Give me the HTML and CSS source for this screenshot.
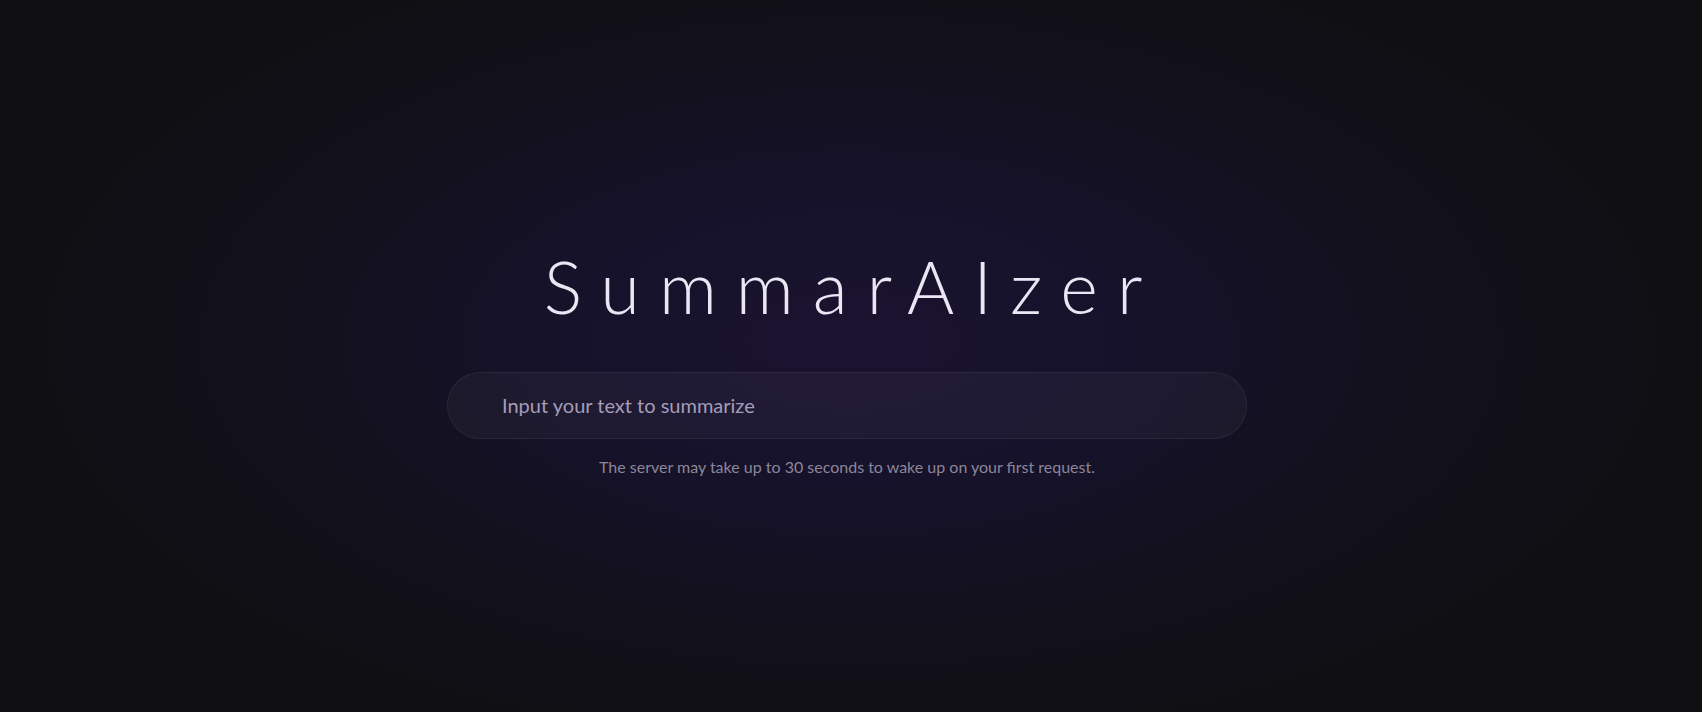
FILE: index.html
```html
<!DOCTYPE html>
<html lang="en">
<head>
<meta charset="utf-8">
<title>SummarAIzer</title>
<link rel="stylesheet" href="styles.css">
</head>
<body>
<main class="page">
  <h1 class="title">SummarAIzer</h1>
  <form class="search">
    <input class="search-input" type="text" placeholder="Input your text to summarize">
  </form>
  <p class="note">The server may take up to 30 seconds to wake up on your first request.</p>
</main>
</body>
</html>
```
FILE: styles.css
```css
html, body {
  margin: 0;
  padding: 0;
  height: 100%;
}
body {
  background: #0f0f12;
  font-family: Lato, "Noto Sans", sans-serif;
  overflow: hidden;
}
.page {
  height: 100vh;
  display: flex;
  flex-direction: column;
  align-items: center;
  justify-content: center;
  background: radial-gradient(ellipse 52% 62% at 50% 48%, #1a1330 0%, #16122a 35%, #121019 70%, #0f0f12 100%);
  padding: 6px 8px 0 0;
  box-sizing: border-box;
}
.title {
  margin: 0 0 42px 0;
  font-family: Lato, "Noto Sans", sans-serif;
  font-weight: 300;
  font-size: 72px;
  line-height: 88px;
  letter-spacing: 19px;
  color: #ebe6f4;
  padding-left: 11px;
}
.search {
  margin: 0;
}
.search-input {
  box-sizing: border-box;
  width: 800px;
  height: 67px;
  border-radius: 34px;
  border: 1px solid rgba(255, 255, 255, 0.06);
  background: rgba(255, 255, 255, 0.035);
  padding: 0 24px 0 54px;
  font-family: Lato, "Noto Sans", sans-serif;
  font-size: 20px;
  color: #ddd6ea;
  outline: none;
  display: block;
}
.search-input::placeholder {
  color: #a59db8;
}
.note {
  margin: 18px 0 0 0;
  font-family: Lato, "Noto Sans", sans-serif;
  font-size: 16px;
  line-height: 20px;
  color: #8c8698;
}
```
